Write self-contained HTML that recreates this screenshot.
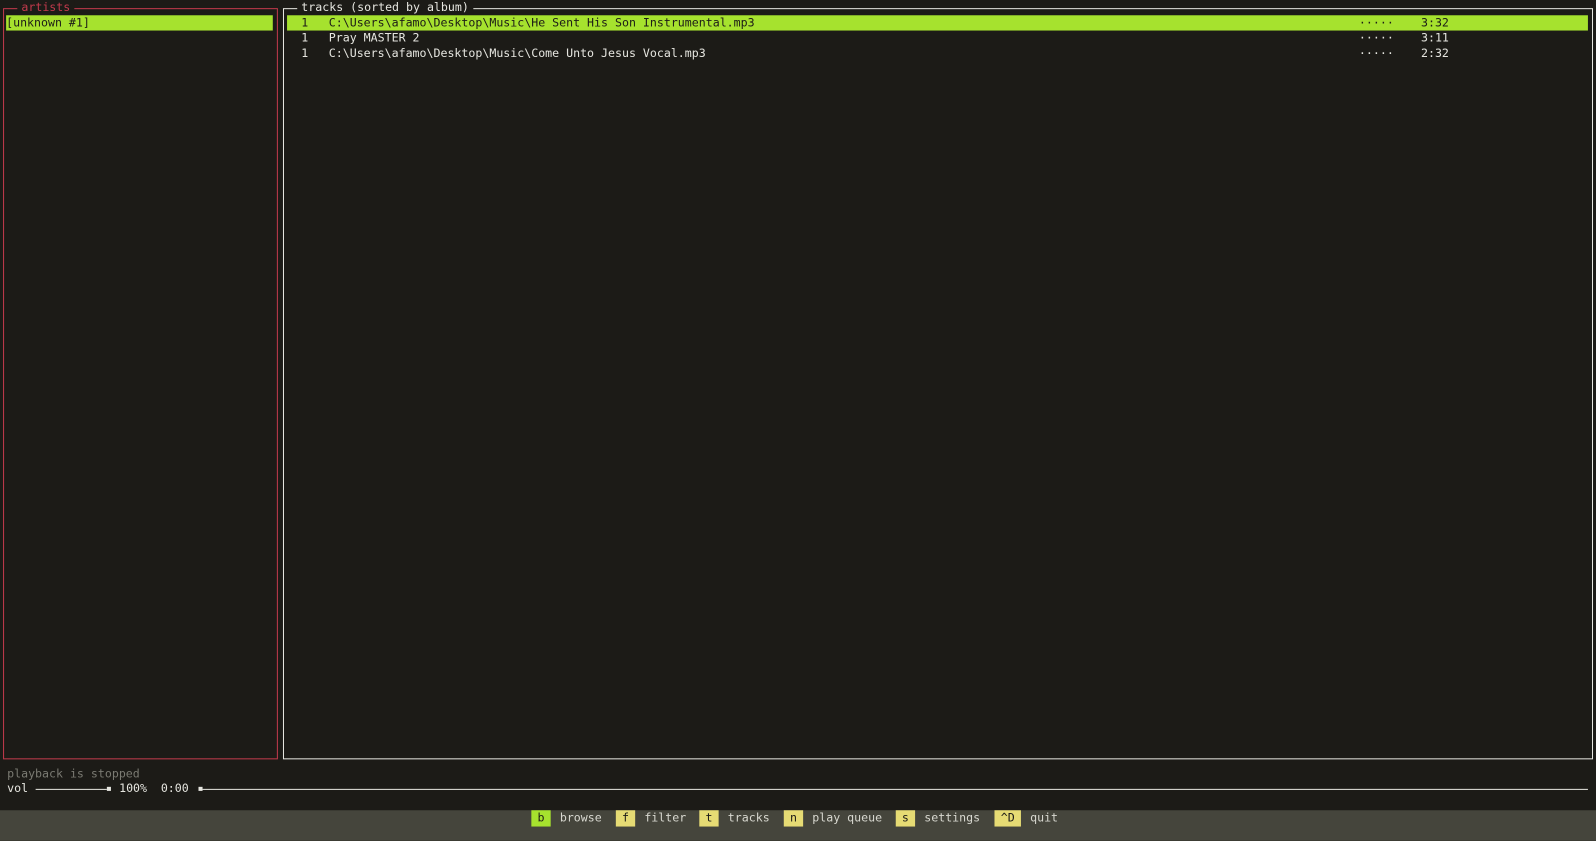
<!DOCTYPE html>
<html><head><meta charset="utf-8"><style>
html,body{margin:0;padding:0;width:1596px;height:825px;overflow:hidden;background:#1c1b17;font-family:"DejaVu Sans Mono","Liberation Mono",monospace;font-size:11.4px;color:#e6e6e0}
#w{position:absolute;left:0;top:0;width:1568px;height:811px;transform:scale(1.0179);transform-origin:0 0}
.a{position:absolute;white-space:pre;line-height:15px}
.box{position:absolute;box-sizing:border-box}
</style></head><body><div id="w">
<div class="box" style="left:3px;top:8px;width:270px;height:738px;border:1px solid #c23a4c"></div>
<div class="a" style="left:17px;top:0;background:#1c1b17;color:#c23a4c;padding:0 4px">artists</div>
<div class="a" style="left:6px;top:15px;width:262px;background:#a6e22e;color:#1c1b17">[unknown #1]</div>

<div class="box" style="left:278px;top:8px;width:1287px;height:738px;border:1px solid #e6e6e0"></div>
<div class="a" style="left:292px;top:0;background:#1c1b17;padding:0 4px">tracks (sorted by album)</div>
<div class="a" style="left:282px;top:15px;width:1278px;height:15px;background:#a6e22e"></div>
<div class="a" style="left:296px;top:15px;color:#1c1b17">1</div>
<div class="a" style="left:323px;top:15px;color:#1c1b17">C:\Users\afamo\Desktop\Music\He Sent His Son Instrumental.mp3</div>
<div class="a" style="left:1335px;top:15px;color:#1c1b17">·····</div>
<div class="a" style="left:1396px;top:15px;color:#1c1b17">3:32</div>
<div class="a" style="left:296px;top:30px">1</div>
<div class="a" style="left:323px;top:30px">Pray MASTER 2</div>
<div class="a" style="left:1335px;top:30px">·····</div>
<div class="a" style="left:1396px;top:30px">3:11</div>
<div class="a" style="left:296px;top:45px">1</div>
<div class="a" style="left:323px;top:45px">C:\Users\afamo\Desktop\Music\Come Unto Jesus Vocal.mp3</div>
<div class="a" style="left:1335px;top:45px">·····</div>
<div class="a" style="left:1396px;top:45px">2:32</div>

<div class="a" style="left:7px;top:753px;color:#7a7a72">playback is stopped</div>
<div class="a" style="left:7px;top:767px">vol</div>
<div class="box" style="left:35px;top:775px;width:70px;height:1px;background:#e6e6e0"></div>
<div class="box" style="left:105px;top:773px;width:4px;height:4px;background:#e6e6e0"></div>
<div class="a" style="left:117px;top:767px">100%</div>
<div class="a" style="left:158px;top:767px">0:00</div>
<div class="box" style="left:195px;top:773px;width:4px;height:4px;background:#e6e6e0"></div>
<div class="box" style="left:199px;top:775px;width:1361px;height:1px;background:#e6e6e0"></div>

<div class="box" style="left:0;top:796px;width:1568px;height:30px;background:#45453c"></div>
<div class="a" style="left:522px;top:796px;width:19px;height:16px;background:#a6e22e;color:#1c1b17;text-align:center">b</div>
<div class="a" style="left:550px;top:796px;color:#d8d8d0">browse</div>
<div class="a" style="left:605px;top:796px;width:19px;height:16px;background:#e6db74;color:#1c1b17;text-align:center">f</div>
<div class="a" style="left:633px;top:796px;color:#d8d8d0">filter</div>
<div class="a" style="left:687px;top:796px;width:19px;height:16px;background:#e6db74;color:#1c1b17;text-align:center">t</div>
<div class="a" style="left:715px;top:796px;color:#d8d8d0">tracks</div>
<div class="a" style="left:770px;top:796px;width:19px;height:16px;background:#e6db74;color:#1c1b17;text-align:center">n</div>
<div class="a" style="left:798px;top:796px;color:#d8d8d0">play queue</div>
<div class="a" style="left:880px;top:796px;width:19px;height:16px;background:#e6db74;color:#1c1b17;text-align:center">s</div>
<div class="a" style="left:908px;top:796px;color:#d8d8d0">settings</div>
<div class="a" style="left:977px;top:796px;width:26px;height:16px;background:#e6db74;color:#1c1b17;text-align:center">^D</div>
<div class="a" style="left:1012px;top:796px;color:#d8d8d0">quit</div>
</div></body></html>
